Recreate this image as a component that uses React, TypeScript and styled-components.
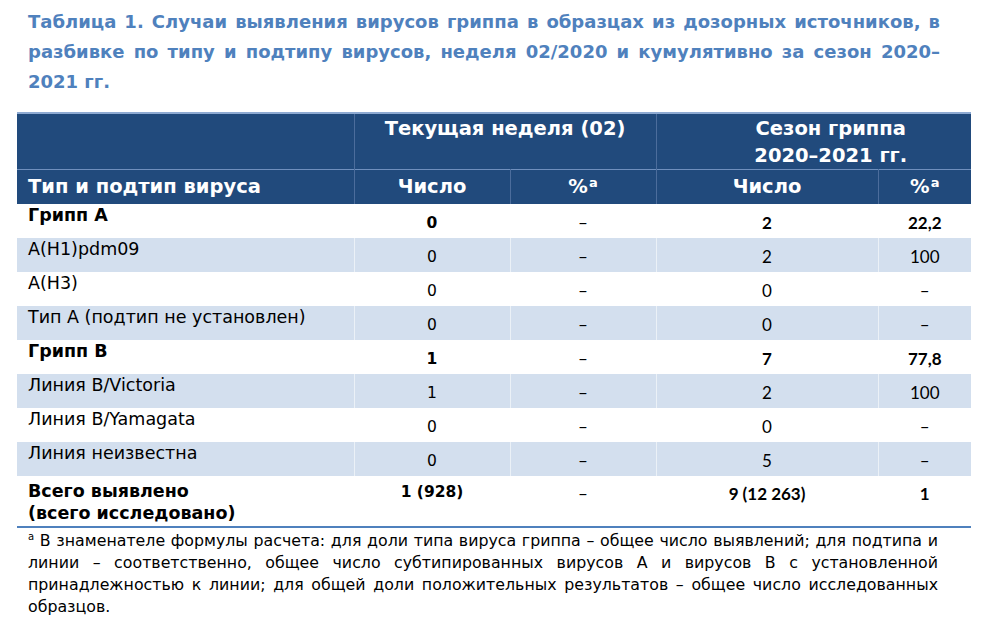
import React from "react";
import styled, { createGlobalStyle } from "styled-components";

const GlobalStyle = createGlobalStyle`
  html, body { margin: 0; padding: 0; background: #ffffff; }
  body { font-family: "DejaVu Sans", Tahoma, sans-serif; color: #000; }
`;

const Page = styled.div`
  width: 1005px;
  height: 626px;
  box-sizing: border-box;
  padding: 7px 0 0 17px;
  overflow: hidden;
`;

const Title = styled.h1`
  margin: 0 0 15px 11px;
  width: 912px;
  font-family: "DejaVu Sans", Tahoma, sans-serif;
  font-weight: bold;
  font-size: 18px;
  line-height: 30px;
  color: #4f81bd;
`;

const Line = styled.span<{ $last?: boolean }>`
  display: block;
  white-space: nowrap;
  text-align: justify;
  text-align-last: ${(p) => (p.$last ? "left" : "justify")};
`;

const Table = styled.table`
  width: 954px;
  border-collapse: collapse;
  table-layout: fixed;
  border-top: 2px solid #8eaad2;
  border-bottom: 2px solid #4f81bd;
`;

const HeadRow = styled.tr<{ $tall?: boolean }>`
  background: #214a7c;
  height: ${(p) => (p.$tall ? "54px" : "34px")};
  & + & { border-top: 1px solid #6f8fbd; }
`;

const HeadCell = styled.th<{ $align?: "left" | "center"; $top?: boolean; $shift?: number; $first?: boolean }>`
  color: #ffffff;
  font-family: "DejaVu Sans", Tahoma, sans-serif;
  font-weight: bold;
  font-size: 19.5px;
  line-height: 27px;
  text-align: ${(p) => p.$align ?? "center"};
  vertical-align: ${(p) => (p.$top ? "top" : "middle")};
  padding: ${(p) => (p.$top ? "1px" : "0")} 0 0 ${(p) => (p.$align === "left" ? "11px" : `${p.$shift ?? 0}px`)};
  border-left: ${(p) => (p.$first ? "none" : "1px solid #4c6d9c")};
  white-space: nowrap;
`;

const Sup = styled.sup`
  font-size: 13px;
  vertical-align: top;
  position: relative;
  top: -4px;
  margin-left: 1px;
`;

const BodyRow = styled.tr<{ $shade?: boolean; $total?: boolean }>`
  background: ${(p) => (p.$shade ? "#d3dfee" : "#ffffff")};
  height: ${(p) => (p.$total ? "51px" : "34px")};
`;

const NameCell = styled.td<{ $bold?: boolean; $total?: boolean }>`
  font-family: "DejaVu Sans", Tahoma, sans-serif;
  font-size: 17.5px;
  font-weight: ${(p) => (p.$bold ? "bold" : "normal")};
  line-height: ${(p) => (p.$total ? "22px" : "21px")};
  padding: ${(p) => (p.$total ? "4px" : "1px")} 0 0 11px;
  vertical-align: top;
  white-space: nowrap;
`;

const NumCell = styled.td<{ $bold?: boolean; $calibri?: boolean; $total?: boolean }>`
  font-family: ${(p) => (p.$calibri ? `"Lato", "Open Sans", sans-serif` : `"DejaVu Sans", Tahoma, sans-serif`)};
  font-size: ${(p) => (p.$calibri ? "17px" : "15.5px")};
  font-weight: ${(p) => (p.$bold ? "bold" : "normal")};
  text-align: center;
  vertical-align: ${(p) => (p.$total ? "top" : "middle")};
  padding: ${(p) => (p.$total ? "7px 0 0" : "4px 0 0")};
  border-left: 1px solid rgba(255, 255, 255, 0.55);
`;

const Footnote = styled.div`
  margin: 2px 0 0 11px;
  width: 910px;
  font-family: "DejaVu Sans", Tahoma, sans-serif;
  font-size: 15.8px;
  line-height: 22px;
`;

const FootSup = styled.sup`
  font-size: 10px;
  vertical-align: top;
  position: relative;
  top: -4px;
`;

type Row = {
  name: string;
  bold?: boolean;
  shade?: boolean;
  c1: string;
  c2: string;
  c3: string;
  c4: string;
};

const rows: Row[] = [
  { name: "Грипп А", bold: true, c1: "0", c2: "–", c3: "2", c4: "22,2" },
  { name: "A(H1)pdm09", shade: true, c1: "0", c2: "–", c3: "2", c4: "100" },
  { name: "A(H3)", c1: "0", c2: "–", c3: "0", c4: "–" },
  { name: "Тип А (подтип не установлен)", shade: true, c1: "0", c2: "–", c3: "0", c4: "–" },
  { name: "Грипп В", bold: true, c1: "1", c2: "–", c3: "7", c4: "77,8" },
  { name: "Линия B/Victoria", shade: true, c1: "1", c2: "–", c3: "2", c4: "100" },
  { name: "Линия B/Yamagata", c1: "0", c2: "–", c3: "0", c4: "–" },
  { name: "Линия неизвестна", shade: true, c1: "0", c2: "–", c3: "5", c4: "–" },
];

export default function App() {
  return (
    <>
      <GlobalStyle />
      <Page>
        <Title>
          <Line>Таблица 1. Случаи выявления вирусов гриппа в образцах из дозорных источников, в</Line>
          <Line>разбивке по типу и подтипу вирусов, неделя 02/2020 и кумулятивно за сезон 2020–</Line>
          <Line $last>2021 гг.</Line>
        </Title>
        <Table>
          <colgroup>
            <col style={{ width: "337px" }} />
            <col style={{ width: "156px" }} />
            <col style={{ width: "146px" }} />
            <col style={{ width: "222px" }} />
            <col style={{ width: "93px" }} />
          </colgroup>
          <thead>
            <HeadRow $tall>
              <HeadCell $first $top />
              <HeadCell colSpan={2} $top>
                Текущая неделя (02)
              </HeadCell>
              <HeadCell colSpan={2} $top $shift={34}>
                Сезон гриппа
                <br />
                2020–2021 гг.
              </HeadCell>
            </HeadRow>
            <HeadRow>
              <HeadCell $first $align="left">
                Тип и подтип вируса
              </HeadCell>
              <HeadCell>Число</HeadCell>
              <HeadCell>
                %<Sup>a</Sup>
              </HeadCell>
              <HeadCell>Число</HeadCell>
              <HeadCell>
                %<Sup>a</Sup>
              </HeadCell>
            </HeadRow>
          </thead>
          <tbody>
            {rows.map((r) => (
              <BodyRow key={r.name} $shade={r.shade}>
                <NameCell $bold={r.bold}>{r.name}</NameCell>
                <NumCell $bold={r.bold}>{r.c1}</NumCell>
                <NumCell $calibri>{r.c2}</NumCell>
                <NumCell $calibri $bold={r.bold}>
                  {r.c3}
                </NumCell>
                <NumCell $calibri $bold={r.bold}>
                  {r.c4}
                </NumCell>
              </BodyRow>
            ))}
            <BodyRow $total>
              <NameCell $bold $total>
                Всего выявлено
                <br />
                (всего исследовано)
              </NameCell>
              <NumCell $bold $total>
                1 (928)
              </NumCell>
              <NumCell $calibri $total>
                –
              </NumCell>
              <NumCell $calibri $bold $total>
                9 (12 263)
              </NumCell>
              <NumCell $calibri $bold $total>
                1
              </NumCell>
            </BodyRow>
          </tbody>
        </Table>
        <Footnote>
          <Line>
            <FootSup>a</FootSup> В знаменателе формулы расчета: для доли типа вируса гриппа – общее число выявлений; для подтипа и
          </Line>
          <Line>линии – соответственно, общее число субтипированных вирусов А и вирусов В с установленной</Line>
          <Line>принадлежностью к линии; для общей доли положительных результатов – общее число исследованных</Line>
          <Line $last>образцов.</Line>
        </Footnote>
      </Page>
    </>
  );
}
